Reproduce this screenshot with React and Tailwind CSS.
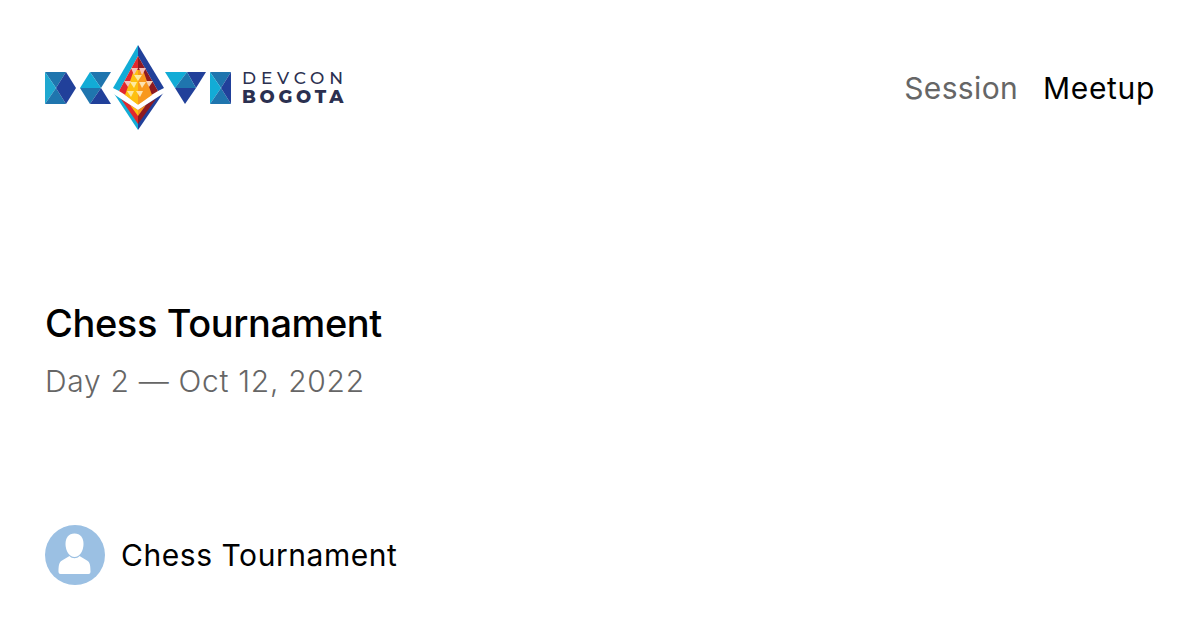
const Logo = () => (
  <svg width="187" height="87" viewBox="45 45 187 87" className="shrink-0">
    {/* D */}
    <polygon points="45,72 66,72 56,88" fill="#1f75ae" />
    <polygon points="45,72 56,88 45,104" fill="#1fa8d0" />
    <polygon points="45,104 56,88 66,104" fill="#1f75ae" />
    <polygon points="66,72 76,88 66,104 56,88" fill="#21409a" />
    {/* E */}
    <polygon points="90,72 111,72 101,88" fill="#1f75ae" />
    <polygon points="80,88 90,72 101,88" fill="#12acd6" />
    <polygon points="80,88 101,88 90,104" fill="#1f75ae" />
    <polygon points="90,104 101,88 111,104" fill="#21409a" />
    {/* diamond */}
    <polygon points="138,45 113,88 119,91 138,56" fill="#12acd6" />
    <polygon points="138,45 164,88 158,91 138,56" fill="#21409a" />
    <polygon points="138,56 119,91 138,103" fill="#e1282d" />
    <polygon points="138,56 158,91 138,103" fill="#8e1a20" />
    <polygon points="134,70 138,70 138,105 125,95 129,84" fill="#fdc010" />
    <polygon points="138,70 143,70 148,84 152,95 138,105" fill="#f8981d" />
    <polygon points="131,68 138,68 134,75" fill="#f6c2b8" />
    <polygon points="139,68 146,68 142,75" fill="#f6c2b8" />
    <polygon points="134,75 142,75 138,81" fill="#fdeaa0" />
    <polygon points="124,81 131,81 128,87" fill="#f6c2b8" />
    <polygon points="146,81 153,81 149,87" fill="#f8d0b0" />
    <polygon points="130,82 137,82 134,88" fill="#fdeaa0" />
    <polygon points="139,82 146,82 142,88" fill="#fde3b0" />
    <polygon points="127,91 134,91 131,97" fill="#fdeaa0" />
    <polygon points="136,91 143,91 140,97" fill="#fde3b0" />
    <polygon points="113,92 138,108 138,130" fill="#12acd6" />
    <polygon points="164,92 138,108 138,130" fill="#21409a" />
    <polygon points="121,99 138,109 138,124" fill="#e1282d" />
    <polygon points="156,99 138,109 138,124" fill="#8e1a20" />
    <polygon points="130,105 138,110 138,116" fill="#fdc010" />
    <polygon points="146,105 138,110 138,116" fill="#f8981d" />
    <polygon points="112,90 138,105 164,90 164,93 138,110 112,93" fill="#ffffff" />
    {/* V */}
    <polygon points="165,72 187,72 175,88" fill="#12acd6" />
    <polygon points="187,72 206,72 196,88" fill="#21409a" />
    <polygon points="175,88 187,72 196,88" fill="#1f75ae" />
    <polygon points="175,88 196,88 185,104" fill="#21409a" />
    {/* I */}
    <polygon points="210,72 231,72 221,88" fill="#1f75ae" />
    <polygon points="210,72 221,88 210,104" fill="#12acd6" />
    <polygon points="210,104 221,88 231,104" fill="#1f75ae" />
    <polygon points="231,72 221,88 231,104" fill="#21409a" />
  </svg>
)

const Avatar = () => (
  <svg width="60" height="60" viewBox="0 0 60 60" className="shrink-0">
    <circle cx="30" cy="30" r="30" fill="#9bc0e3" />
    <path d="M29.5 8.5 C35.5 8.5 38.5 13 38.5 19 C38.5 26 34.5 32 29.5 32 C24.5 32 20.5 26 20.5 19 C20.5 13 23.5 8.5 29.5 8.5 Z" fill="#ffffff" />
    <path d="M13.5 47 C13.5 41 14 37 17 35.5 L24.5 31 C27 34 32 34 34.5 31 L42 35.5 C45 37 45.5 41 45.5 47 Q45.5 49 43.5 49 L15.5 49 Q13.5 49 13.5 47 Z" fill="#ffffff" />
  </svg>
)

export default function App() {
  return (
    <div className="flex h-[630px] w-[1200px] flex-col bg-white px-[45px] font-['Inter',sans-serif] text-black">
      <header className="flex items-start justify-between pt-[45px]">
        <div className="flex items-center">
          <Logo />
          <div className="ml-[10px] -mt-px flex flex-col font-['Montserrat','Open_Sans',sans-serif] text-[#2b3050]">
            <span className="text-[17px] font-medium leading-[19px] tracking-[4.9px]">DEVCON</span>
            <span className="text-[18px] font-extrabold leading-[19px] tracking-[3.7px]">BOGOTA</span>
          </div>
        </div>
        <nav className="flex gap-[25px] pt-[22px] text-[30px] leading-[42px]">
          <span className="tracking-[0.35px] text-[#666666]">Session</span>
          <span className="tracking-[0.65px]">Meetup</span>
        </nav>
      </header>
      <main className="mt-[166px] flex flex-col">
        <h1 className="text-[38px] font-[550] leading-[50px] tracking-[-0.4px]">Chess Tournament</h1>
        <p className="mt-[12px] text-[30px] font-[350] leading-[42px] tracking-[0.7px] text-[#666666]">Day 2 — Oct 12, 2022</p>
      </main>
      <footer className="mt-[123px] flex items-center gap-4">
        <Avatar />
        <span className="text-[30px] leading-[42px] tracking-[0.55px]">Chess Tournament</span>
      </footer>
    </div>
  )
}
